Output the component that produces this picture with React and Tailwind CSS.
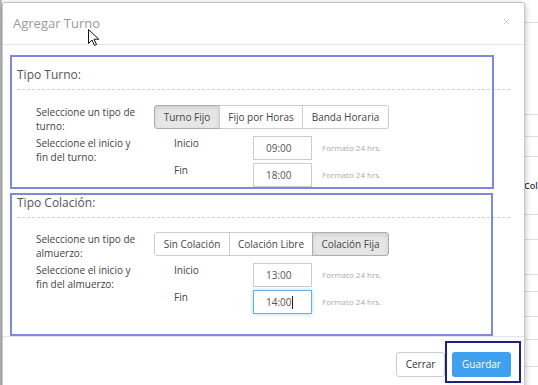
import { X } from "lucide-react"

const bgRows = [23, 92, 22, 20, 58, 25, 35, 17, 25, 23, 27, 30]

const BackgroundTable = () => {
  return (
    <div className="flex flex-col w-full border-l-2 border-[#bdbdbd]">
      {bgRows.map((h, i) => (
        <div
          key={i}
          style={{ height: h }}
          className="flex items-center border-b border-[#dedede] text-[9px] font-semibold text-[#333]"
        >
          {i === 4 && <span className="pl-[522px] whitespace-nowrap">Col</span>}
        </div>
      ))}
    </div>
  )
}

const ButtonGroup = ({ items }) => {
  return (
    <div className="flex">
      {items.map((it) => (
        <button
          key={it.label}
          style={{ width: it.w }}
          className={
            "h-[24px] border text-[10px] -ml-px first:ml-0 first:rounded-l-[3px] last:rounded-r-[3px] " +
            (it.active
              ? "bg-[#e6e6e6] border-[#adadad] text-[#444] shadow-[inset_0_2px_4px_rgba(0,0,0,0.1)]"
              : "bg-white border-[#cccccc] text-[#444]")
          }
        >
          {it.label}
        </button>
      ))}
    </div>
  )
}

const TimeInput = ({ value, focused }) => {
  return (
    <div
      className={
        "w-[59px] h-[24px] flex items-center pl-[12px] border text-[10px] text-[#555] bg-white " +
        (focused ? "border-[#66afe9] shadow-[0_0_4px_rgba(102,175,233,0.5)]" : "border-[#cccccc]")
      }
    >
      {value}
      {focused && <span className="w-px h-[13px] bg-[#222]" />}
    </div>
  )
}

const Section = ({ title, typeLabel, rangeLabel, items, start, end, focusEnd, btnMt }) => {
  return (
    <div className="flex flex-col">
      <div className="h-[20px] flex items-center text-[12px] text-[#555]">{title}</div>
      <div className="mt-[4px] border-t border-dashed border-[#cfcfcf]" />
      <div className={"flex h-[24px] pl-[19px] " + btnMt}>
        <div className="w-[118px] text-[10px] leading-[14px] text-[#444] whitespace-nowrap">
          {typeLabel[0]}
          <br />
          {typeLabel[1]}
        </div>
        <ButtonGroup items={items} />
      </div>
      <div className="flex pl-[19px] mt-[7px]">
        <div className="w-[118px] text-[10px] leading-[14px] text-[#444] whitespace-nowrap">
          {rangeLabel[0]}
          <br />
          {rangeLabel[1]}
        </div>
        <div className="flex flex-col gap-[3px]">
          <div className="flex h-[24px]">
            <div className="w-[99px] pl-[20px] text-[10px] leading-[14px] text-[#444]">Inicio</div>
            <TimeInput value={start} />
            <div className="ml-[10px] self-center text-[8px] text-[#aaa]">Formato 24 hrs.</div>
          </div>
          <div className="flex h-[24px]">
            <div className="w-[99px] pl-[20px] text-[10px] leading-[14px] text-[#444]">Fin</div>
            <TimeInput value={end} focused={focusEnd} />
            <div className="ml-[10px] self-center text-[8px] text-[#aaa]">Formato 24 hrs.</div>
          </div>
        </div>
      </div>
    </div>
  )
}

export default function App() {
  return (
    <div className="relative w-[538px] h-[385px] overflow-hidden bg-white font-['Open_Sans',sans-serif]">
      <BackgroundTable />

      <div className="absolute left-[2px] top-[2px] w-[523px] h-[420px] bg-white border border-[#c6c6c6] rounded-[3px] shadow-[0_2px_6px_rgba(0,0,0,0.3)]">
        <div className="h-[42px] flex items-center justify-between pl-[10px] pr-[13px] border-b border-[#e5e5e5]">
          <span className="text-[13px] text-[#9a9a9a]">Agregar Turno</span>
          <X size={9} strokeWidth={2.5} className="text-[#c8c8c8] -mt-[4px]" />
        </div>

        <div className="flex flex-col gap-[6px] px-[14px] pt-[20px] pb-[22px] border-b border-[#e5e5e5]">
          <Section
            title="Tipo Turno:"
            typeLabel={["Seleccione un tipo de", "turno:"]}
            rangeLabel={["Seleccione el inicio y", "fin del turno:"]}
            items={[
              { label: "Turno Fijo", w: 66, active: true },
              { label: "Fijo por Horas", w: 84 },
              { label: "Banda Horaria", w: 87 },
            ]}
            start="09:00"
            end="18:00"
            btnMt="mt-[15px]"
          />
          <Section
            title="Tipo Colación:"
            typeLabel={["Seleccione un tipo de", "almuerzo:"]}
            rangeLabel={["Seleccione el inicio y", "fin del almuerzo:"]}
            items={[
              { label: "Sin Colación", w: 76 },
              { label: "Colación Libre", w: 84 },
              { label: "Colación Fija", w: 77, active: true },
            ]}
            start="13:00"
            end="14:00"
            focusEnd
            btnMt="mt-[14px]"
          />
        </div>

        <div className="flex justify-end gap-[7px] pt-[15px] pr-[13px]">
          <button className="w-[49px] h-[25px] border border-[#cccccc] rounded-[3px] bg-white text-[10px] text-[#333]">
            Cerrar
          </button>
          <button className="w-[59px] h-[25px] rounded-[3px] bg-[#3fa0f0] text-[10px] text-white">
            Guardar
          </button>
        </div>
      </div>

      <div className="absolute left-[10px] top-[55px] w-[484px] h-[134px] border-2 border-[#8087e0] pointer-events-none" />
      <div className="absolute left-[10px] top-[193px] w-[483px] h-[143px] border-2 border-[#8087e0] pointer-events-none" />
      <div className="absolute left-[445px] top-[341px] w-[76px] h-[42px] border-2 border-[#1d2180] pointer-events-none" />

      {/* mouse pointer */}
      <svg className="absolute left-[88px] top-[29px]" width="12" height="18" viewBox="0 0 12 18">
        <path d="M0.5 0.5 L0.5 14.5 L4 11 L6.5 16.5 L8.5 15.5 L6 10.2 L10.8 10.2 Z" fill="#fff" stroke="#111" strokeWidth="1" strokeLinejoin="round" />
      </svg>
    </div>
  )
}
